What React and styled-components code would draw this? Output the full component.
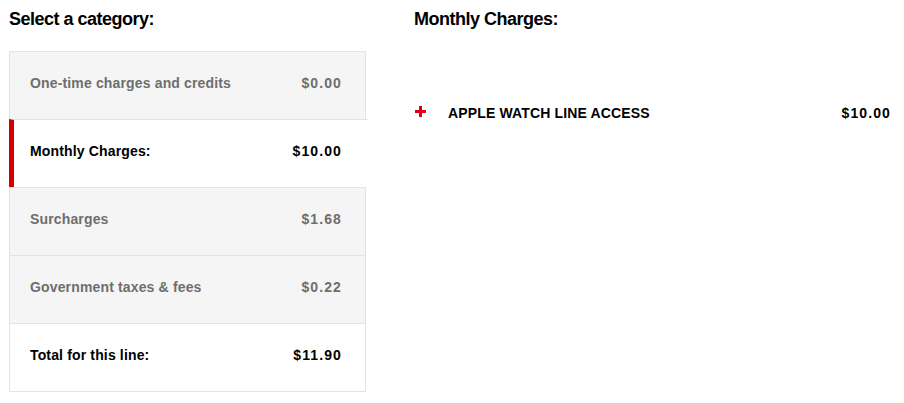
import React, { useState } from "react";
import styled, { createGlobalStyle } from "styled-components";

const GlobalStyle = createGlobalStyle`
  body {
    margin: 0;
    background: #fff;
    font-family: "Liberation Sans", Arial, sans-serif;
    color: #000;
  }
`;

const categories = [
  { id: "one-time", label: "One-time charges and credits", amount: "$0.00" },
  { id: "monthly", label: "Monthly Charges:", amount: "$10.00" },
  { id: "surcharges", label: "Surcharges", amount: "$1.68" },
  { id: "gov", label: "Government taxes & fees", amount: "$0.22" },
];

const App = () => {
  const [active] = useState("monthly");

  return (
    <StyledPage>
      <GlobalStyle />
      <LeftColumn>
        <Heading>Select a category:</Heading>
        <CategoryList>
          {categories.map((c) => (
            <CategoryRow key={c.id} $active={c.id === active}>
              <span>{c.label}</span>
              <Amount>{c.amount}</Amount>
            </CategoryRow>
          ))}
          <CategoryRow $total>
            <span>Total for this line:</span>
            <Amount>$11.90</Amount>
          </CategoryRow>
        </CategoryList>
      </LeftColumn>
      <RightColumn>
        <Heading>Monthly Charges:</Heading>
        <ChargeItem>
          <PlusIcon viewBox="0 0 11 11" shapeRendering="crispEdges">
            <rect x="4" y="0" width="3" height="11" fill="#e00012" />
            <rect x="0" y="4" width="11" height="3" fill="#e00012" />
          </PlusIcon>
          <ChargeName>APPLE WATCH LINE ACCESS</ChargeName>
          <Amount>$10.00</Amount>
        </ChargeItem>
      </RightColumn>
    </StyledPage>
  );
};

const StyledPage = styled.div`
  display: flex;
  gap: 48px;
  padding: 9px 14px 0 9px;
`;

const LeftColumn = styled.div`
  width: 357px;
  flex-shrink: 0;
`;

const RightColumn = styled.div`
  flex: 1;
  margin-right: -1px;
`;

const Heading = styled.h2`
  margin: 0 0 22px;
  font-size: 18px;
  line-height: 20px;
  font-weight: 700;
  letter-spacing: -0.5px;
  color: #000;
`;

const CategoryList = styled.div`
  border: 1px solid #e3e3e3;
  border-top: none;
`;

const CategoryRow = styled.div`
  display: flex;
  align-items: center;
  justify-content: space-between;
  box-sizing: border-box;
  height: 68px;
  border-top: 1px solid #e3e3e3;
  padding: 0 23px 5px 20px;
  background: ${(p) => (p.$active || p.$total ? "#fff" : "#f5f5f5")};
  color: ${(p) => (p.$active || p.$total ? "#000" : "#6e6e6e")};
  font-size: 14px;
  font-weight: 700;
  letter-spacing: 0.15px;
  cursor: pointer;

  ${(p) =>
    p.$active &&
    `
    margin: 0 -3px 0 -1px;
    border-left: 5px solid #d00000;
    padding-left: 16px;
    padding-right: 26px;
  `}
`;

const Amount = styled.span`
  font-size: 14px;
  font-weight: 700;
  letter-spacing: 1.1px;
`;

const ChargeItem = styled.div`
  display: flex;
  align-items: center;
  margin-top: 76px;
  padding-left: 1px;
`;

const PlusIcon = styled.svg`
  display: block;
  width: 11px;
  height: 11px;
  flex-shrink: 0;
  margin-right: 22px;
  position: relative;
  top: -2px;
`;

const ChargeName = styled.span`
  flex: 1;
  font-size: 14px;
  font-weight: 700;
  letter-spacing: 0.15px;
`;

export default App;
